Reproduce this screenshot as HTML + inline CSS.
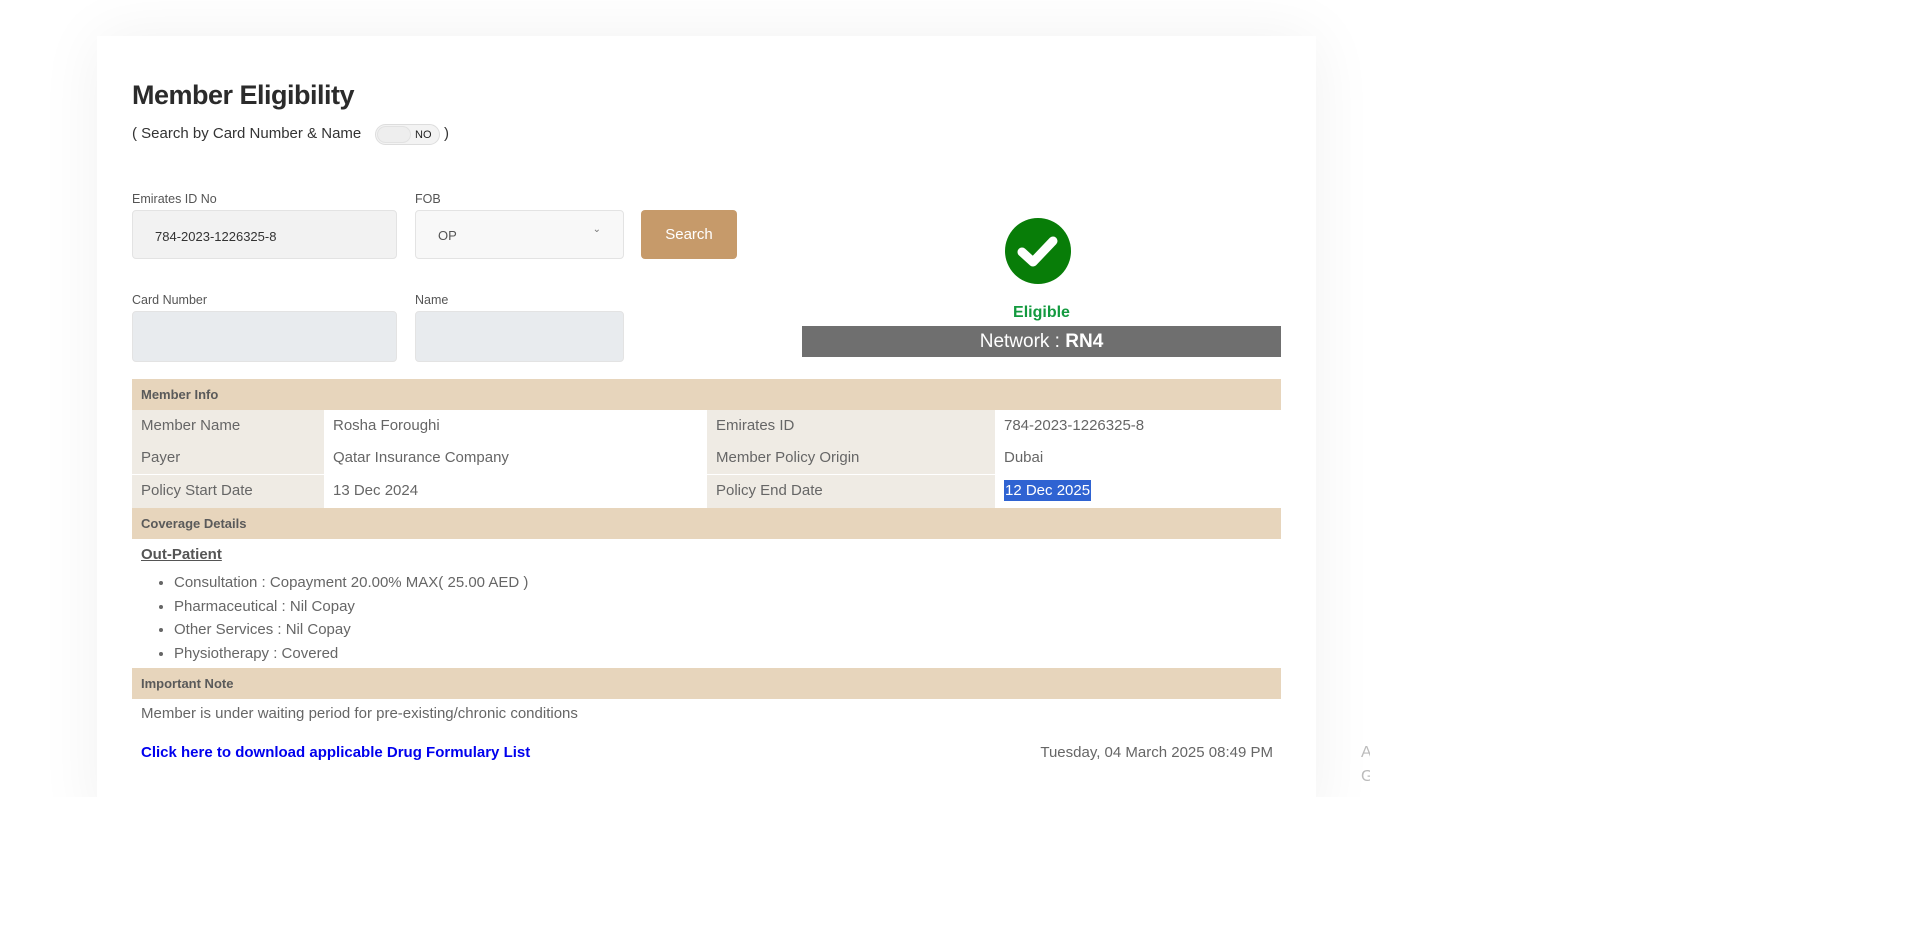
<!DOCTYPE html>
<html><head><meta charset="utf-8"><style>
*{box-sizing:border-box;margin:0;padding:0}
body{width:1914px;height:928px;background:#fff;font-family:"Liberation Sans",sans-serif;position:relative;overflow:hidden;color:#666}
.clip{position:absolute;left:0;top:0;width:1370px;height:797px;overflow:hidden}
.card{position:absolute;left:97px;top:36px;width:1219px;height:790px;background:#fff;box-shadow:0 0 60px rgba(0,0,0,.06)}
.a{position:absolute}
h1{position:absolute;left:132px;top:80px;font-size:27px;font-weight:bold;color:#2b2b2b;letter-spacing:-0.5px}
.sub{left:132px;top:125px;font-size:15px;color:#333}
.tog{left:375px;top:124px;width:65px;height:21px;border:1px solid #ddd;border-radius:11px;background:#f3f3f3}
.tog .k{position:absolute;left:1px;top:1px;width:34px;height:17px;border-radius:9px;background:#eee;border:1px solid #e2e2e2}
.tog .t{position:absolute;left:39px;top:4px;font-size:11px;color:#222}
.lbl{font-size:12.5px;color:#555}
.inp{border:1px solid #e3e3e3;border-radius:4px}
.th{position:absolute;left:132px;width:1149px;background:#e7d5bc;font-size:13px;font-weight:bold;color:#5a5a5a;padding-left:9px}
.row{position:absolute;left:132px;width:1149px;height:32px;font-size:15px;color:#666}
.row div{position:absolute;top:0;height:32px;line-height:32px;padding-left:9px}
.l{background:#efebe4}
li{font-size:15px;color:#666;height:23.5px;line-height:23.5px}
</style></head><body>
<div class="clip"><div class="card"></div></div>
<h1>Member Eligibility</h1>
<div class="a sub">( Search by Card Number &amp; Name</div>
<div class="a tog"><div class="k"></div><div class="t">NO</div></div>
<div class="a sub" style="left:444px">)</div>

<div class="a lbl" style="left:132px;top:192px">Emirates ID No</div>
<div class="a inp" style="left:132px;top:210px;width:265px;height:49px;background:#f2f2f2;font-size:13px;color:#333;padding:18px 0 0 22px">784-2023-1226325-8</div>
<div class="a lbl" style="left:415px;top:192px">FOB</div>
<div class="a inp" style="left:415px;top:210px;width:209px;height:49px;background:#f8f8f8;font-size:13px;color:#555;padding:17px 0 0 22px">OP<span style="position:absolute;right:22px;top:13px;font-size:10px;color:#777">&#8964;</span></div>
<div class="a" style="left:641px;top:210px;width:96px;height:49px;background:#c69a6a;border-radius:4px;color:#fff;font-size:15px;text-align:center;line-height:49px">Search</div>

<div class="a lbl" style="left:132px;top:293px">Card Number</div>
<div class="a inp" style="left:132px;top:311px;width:265px;height:51px;background:#e8ebee"></div>
<div class="a lbl" style="left:415px;top:293px">Name</div>
<div class="a inp" style="left:415px;top:311px;width:209px;height:51px;background:#e8ebee"></div>

<svg class="a" style="left:1005px;top:218px" width="66" height="66" viewBox="0 0 66 66"><circle cx="33" cy="33" r="33" fill="#087d08"/><path d="M17 34 L28 44 L48 23" stroke="#fff" stroke-width="9" fill="none" stroke-linecap="round" stroke-linejoin="round"/></svg>
<div class="a" style="left:802px;top:304px;width:479px;text-align:center;font-size:16px;font-weight:bold;color:#139a3f">Eligible</div>
<div class="a" style="left:802px;top:326px;width:479px;height:31px;background:#6f6f6f;color:#fff;text-align:center;font-size:19px;line-height:31px">Network : <b>RN4</b></div>

<div class="th" style="top:379px;height:31px;line-height:31px">Member Info</div>
<div class="row" style="top:410px"><div class="l" style="left:0;width:192px">Member Name</div><div style="left:192px">Rosha Foroughi</div><div class="l" style="left:575px;width:288px">Emirates ID</div><div style="left:863px">784-2023-1226325-8</div></div>
<div class="row" style="top:442px"><div class="l" style="left:0;width:192px">Payer</div><div style="left:192px">Qatar Insurance Company</div><div class="l" style="left:575px;width:288px">Member Policy Origin</div><div style="left:863px">Dubai</div></div>
<div class="row" style="top:475px;height:33px"><div class="l" style="left:0;width:192px;height:33px">Policy Start Date</div><div style="left:192px">13 Dec 2024</div><div class="l" style="left:575px;width:288px;height:33px">Policy End Date</div><div style="left:863px;padding:0"><span style="margin-left:9px;background:#2f63d2;color:#fff;padding:2px 1px">12 Dec 2025</span></div></div>
<div class="th" style="top:508px;height:31px;line-height:31px">Coverage Details</div>
<div class="a" style="left:141px;top:546px;font-size:15px;font-weight:bold;color:#555;text-decoration:underline">Out-Patient</div>
<ul class="a" style="left:174px;top:571px">
<li>Consultation : Copayment 20.00% MAX( 25.00 AED )</li>
<li>Pharmaceutical : Nil Copay</li>
<li>Other Services : Nil Copay</li>
<li>Physiotherapy : Covered</li>
</ul>
<div class="th" style="top:668px;height:31px;line-height:31px">Important Note</div>
<div class="a" style="left:141px;top:705px;font-size:15px;color:#666">Member is under waiting period for pre-existing/chronic conditions</div>
<div class="a" style="left:141px;top:744px;font-size:15px;font-weight:bold;color:#0000ee">Click here to download applicable Drug Formulary List</div>
<div class="a" style="right:641px;top:744px;font-size:15px;color:#666">Tuesday, 04 March 2025 08:49 PM</div>
<div class="a" style="left:1361px;top:741px;font-size:16px;color:#bbb;line-height:24px;width:9px;overflow:hidden">A<br>G</div>
</body></html>
